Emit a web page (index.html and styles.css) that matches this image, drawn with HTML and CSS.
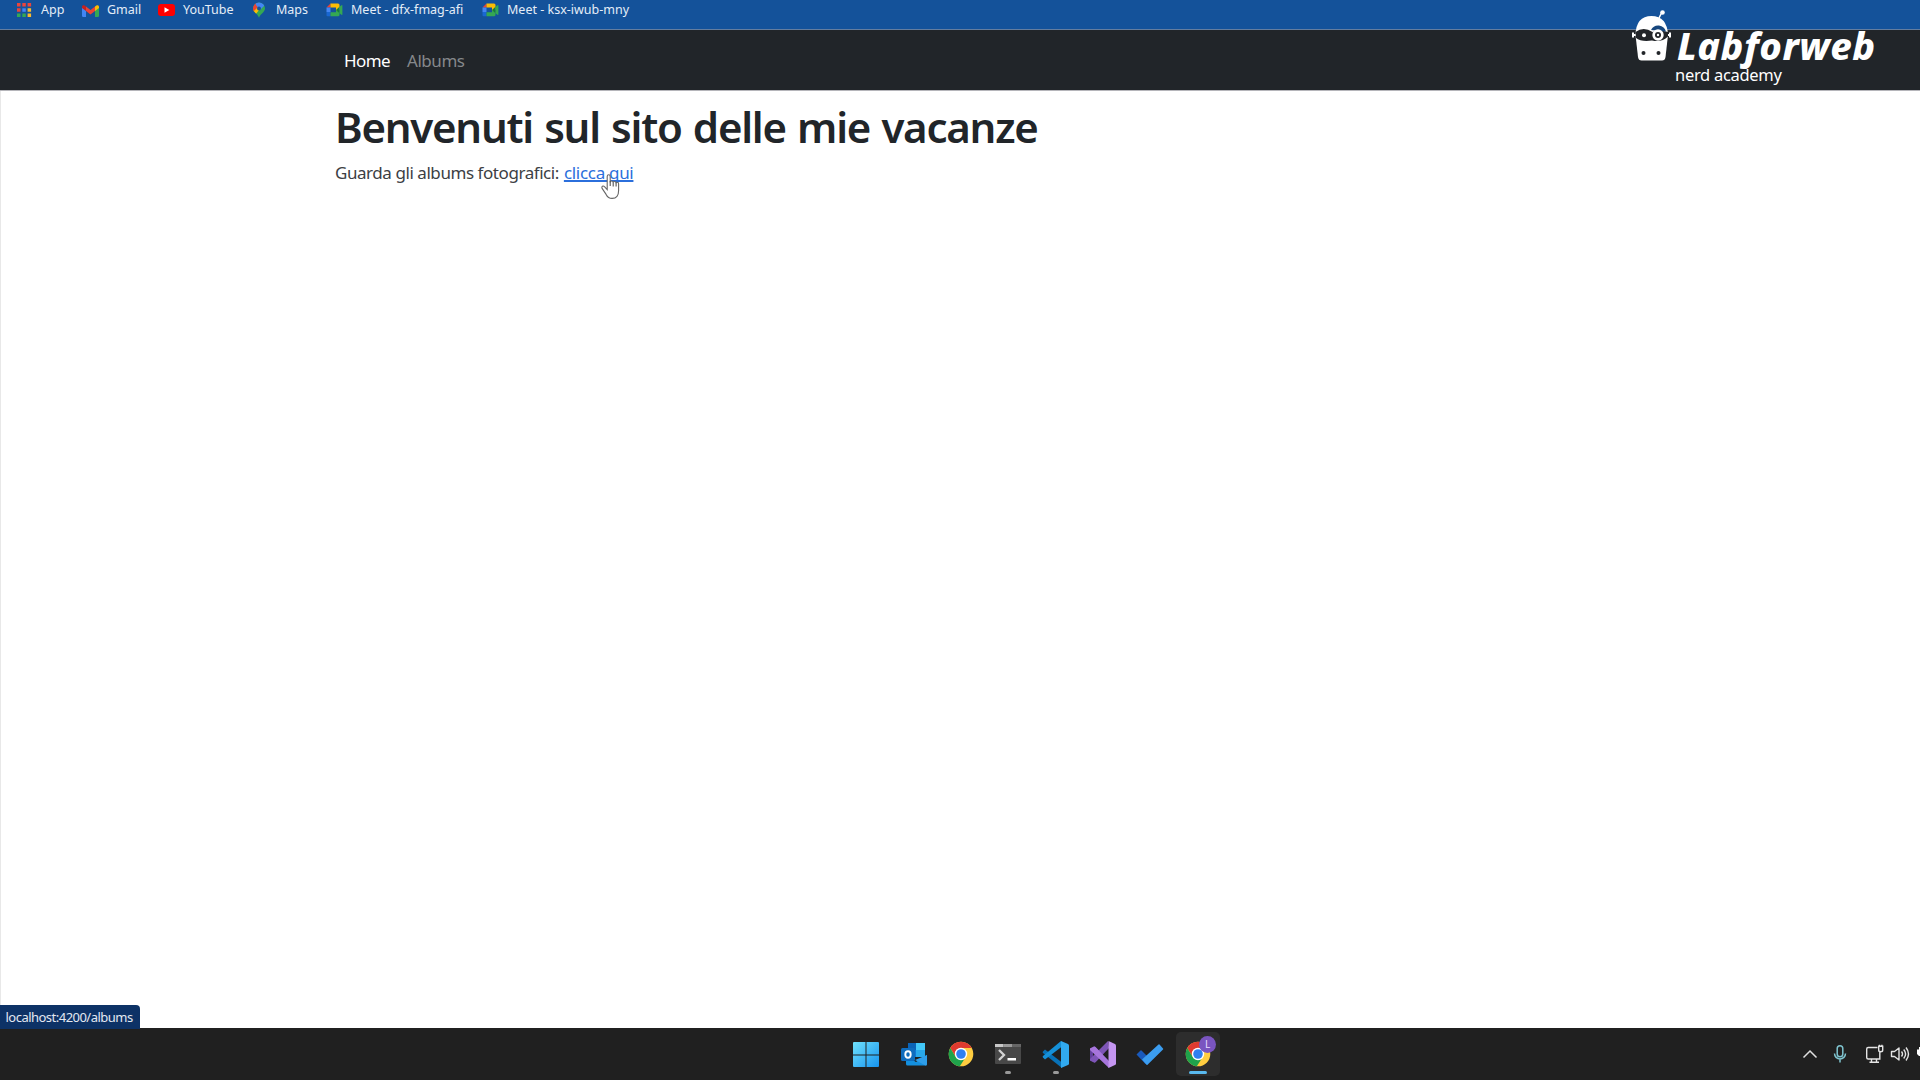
FILE: index.html
```html
<!DOCTYPE html>
<html lang="it">
<head>
<meta charset="utf-8">
<title>Vacanze</title>
<link rel="stylesheet" href="styles.css">
</head>
<body>
<div class="screen">
  <div class="bookmarks">
    <div class="bookmark">
      <svg width="16" height="16" viewBox="0 0 16 16"><g fill="#e8453c"><path d="M1 1h3.500v3.500H1zM6.300 1h3.500v3.500H6.300zM11.600 1h3.500v3.500h-3.500zM1 6.300h3.500v3.500H1z"/></g><path fill="#4285f4" d="M6.300 6.300h3.500v3.500H6.300z"/><path fill="#f9bb2d" d="M11.600 6.300h3.500v3.500h-3.500zM11.600 11.600h3.500v3.500h-3.500z"/><path fill="#34a853" d="M1 11.600h3.500v3.500H1zM6.300 11.600h3.500v3.500H6.300z"/></svg>
      <span class="t-app">App</span>
    </div>
    <div class="bookmark">
      <svg width="17" height="16" viewBox="0 0 17 16"><path fill="#4285f4" d="M0 5l4 3v7H1.200Q0 15 0 13.800z"/><path fill="#34a853" d="M17 5l-4 3v7h2.800q1.200 0 1.200-1.200z"/><path fill="#fbbc04" d="M13 4.600l1.400-1c1.100-.9 2.600-.1 2.600 1.200V6l-4 3z"/><path fill="#ea4335" d="M4 9V4.600L8.500 8 13 4.600V9l-4.500 3.400z"/><path fill="#c5221f" d="M0 6V4.800C0 3.500 1.500 2.700 2.600 3.600l1.400 1V9z"/></svg>
      <span class="t-gmail">Gmail</span>
    </div>
    <div class="bookmark">
      <svg width="17" height="16" viewBox="0 0 17 16"><rect x="0" y="2" width="17" height="12" rx="3" fill="#f00"/><path fill="#fff" d="M6.500 5.300v5.400L11.300 8z"/></svg>
      <span class="t-youtube">YouTube</span>
    </div>
    <div class="bookmark">
      <svg width="16" height="16" viewBox="0 0 16 16"><defs><clipPath id="pin"><path d="M8 .5a6 6 0 0 0-6 6c0 3.600 4.500 5 6 9.300 1.500-4.300 6-5.700 6-9.300a6 6 0 0 0-6-6z"/></clipPath></defs><g clip-path="url(#pin)"><path fill="#34a853" d="M0 0h16v16H0z"/><path fill="#fbbc04" d="M0 11 9 2v5L4 13z"/><path fill="#ea4335" d="M0 0h5l3 4-6 6z"/><path fill="#4285f4" d="M4 0h9l1 3-5 5-4-5z"/></g><circle cx="8" cy="6.500" r="2" fill="#17539b"/></svg>
      <span class="t-maps">Maps</span>
    </div>
    <div class="bookmark">
      <svg width="17" height="16" viewBox="0 0 17 16"><g id="meet"><path fill="#ea4335" d="M0.500 5.500l4-4v4z"/><path fill="#4285f4" d="M.5 5.500h4V10h-4z"/><path fill="#1967d2" d="M.5 10h4v4.200h-3q-1 0-1-1z"/><path fill="#fbbc04" d="M4.500 1.500H12q1.500 0 1.500 1.500v4.500l-3.500 2V5.500H4.500z"/><path fill="#34a853" d="M4.500 10.200H10V8l3.500 2v2.700q0 1.500-1.500 1.500H4.500z"/><path fill="#188038" d="m10 8 3.500-3.300v6.600z"/><path fill="#34a853" d="m13.500 4.700 2-1.500q.9-.5.900.5v8.600q0 1-.9.500l-2-1.500z"/></g></svg>
      <span class="t-meet1">Meet - dfx-fmag-afi</span>
    </div>
    <div class="bookmark">
      <svg width="17" height="16" viewBox="0 0 17 16"><use href="#meet"/></svg>
      <span class="t-meet2">Meet - ksx-iwub-mny</span>
    </div>
  </div>
  <nav class="navbar">
    <a class="nav-link active">Home</a>
    <a class="nav-link">Albums</a>
  </nav>
  <main class="page">
    <h1><span>Benvenuti sul sito delle mie vacanze</span></h1>
    <p><span class="lead">Guarda gli albums fotografici:</span><a class="link">clicca qui</a></p>
  </main>
  <footer class="taskbar">
    <div class="apps">
      <div class="app">
        <svg width="32" height="32" viewBox="0 0 32 32"><defs><linearGradient id="win" x1="3" y1="3" x2="29" y2="29" gradientUnits="userSpaceOnUse"><stop offset="0" stop-color="#6fe0fb"/><stop offset="1" stop-color="#1593f0"/></linearGradient></defs><path fill="url(#win)" d="M3 4q0-1 1-1h11.500v12.500H3zM16.500 3H28q1 0 1 1v11.500H16.500zM3 16.500h12.500V28H4q-1 0-1-1zM16.500 16.500H29V27q0 1-1 1H16.500z"/></svg>
      </div>
      <div class="app">
        <svg width="32" height="32" viewBox="0 0 32 32"><path fill="#28a8ea" d="M10 4h17v14H10z"/><path fill="#0a64b8" d="M10 4h8v7h-8z"/><path fill="#50d9ff" d="M18 4h9v7h-9z" opacity=".65"/><path fill="#0f78d4" d="M10 11h8v7h-8z"/><path fill="#1490df" d="M8 17l10 6 11-7v9q0 1.500-1.500 1.500H9.500Q8 26.500 8 25z"/><path fill="#2f9ee9" d="M29 16v9q0 1.500-1.500 1.500L17 21z"/><rect x="3" y="9" width="14" height="13" rx="1.500" fill="#0f6cbd"/><ellipse cx="10" cy="15.500" rx="2.700" ry="3.200" fill="none" stroke="#fff" stroke-width="1.900"/></svg>
      </div>
      <div class="app">
        <svg width="32" height="32" viewBox="0 0 32 32"><use href="#chrome"/></svg>
      </div>
      <div class="app running">
        <svg width="32" height="32" viewBox="0 0 32 32"><path fill="#484848" d="M3 5h26v19q0 1-1 1H4q-1 0-1-1z"/><path fill="#c8c8c8" d="M3 5h8.500v3H3z"/><path fill="#9a9a9a" d="M11.500 5H20v3h-8.500z"/><path fill="#666" d="M20 5h9v3h-9z"/><path d="m7 11 5 5-5 5" fill="none" stroke="#d4d4d4" stroke-width="2.300"/><path fill="#fff" d="M15.500 19H24v2.500h-8.500z"/></svg>
      </div>
      <div class="app running">
        <svg width="32" height="32" viewBox="0 0 32 32"><path fill="#0872b8" d="m22 23.500-17-13-2 2q-.7.800 0 1.500L22 29z"/><path fill="#1590d8" d="m22 7.500-17 13-2-2q-.7-.8 0-1.500L21 2z"/><path fill="#31aaf0" d="M21 2l7 3q1 .5 1 1.500v18q0 1-1 1.500l-7 3V22.500z"/></svg>
      </div>
      <div class="app">
        <svg width="32" height="32" viewBox="0 0 32 32"><path fill="#63409d" d="m3 9.500 4-2q1-.3 1.500.5L16 15.500 8.500 23q-.7.700-1.500.3l-4-2zm3 3.500v5l2.500-2.500z" fill-rule="evenodd"/><path fill="#7e55b7" d="M21 2 3 20v1.500l4 2q.8.400 1.500-.3L22 9z"/><path fill="#a775dc" d="M3 9.500l4-2q1-.3 1.500.5L22 22v7L3 11z"/><path fill="#c495f1" d="m21.500 2 6.500 3q1 .5 1 1.500v18q0 1-1 1.500l-6.500 3z"/></svg>
      </div>
      <div class="app">
        <svg width="32" height="32" viewBox="0 0 32 32"><path fill="#195abd" d="m2.500 15.500 4-4q.5-.5 1 0l8.500 8.500-4.500 5z"/><path fill="#3b9df0" d="m8 20.500 16.500-15q.5-.5 1 0l3.500 4q.5.500 0 1L13.500 25.700q-.5.500-1 0z"/></svg>
      </div>
      <div class="app current">
        <svg width="32" height="32" viewBox="0 0 32 32"><g id="chrome"><circle cx="16" cy="15" r="12.300" fill="#ffcd40"/><path fill="#df3a2f" d="M5.300 8.900A12.300 12.300 0 0 1 26.700 9H16l-5.200 9z"/><path fill="#1fa34b" d="M5.300 8.900 10.700 18 16 21l3.500-1-4.700 7.300A12.300 12.300 0 0 1 5.300 8.900z"/><circle cx="16" cy="15" r="6.200" fill="#fff"/><circle cx="16" cy="15" r="4.800" fill="#2f7ff0"/></g></svg>
        <span class="avatar">L</span>
      </div>
    </div>
    <div class="tray">
      <svg width="16" height="10" viewBox="0 0 16 10" fill="none" stroke="#e0e0e0" stroke-width="1.500"><path d="m1.500 8.500 6.500-6.500 6.500 6.500"/></svg>
      <svg width="14" height="20" viewBox="0 0 14 20" fill="none" stroke="#7fc4cf" stroke-width="1.500"><rect x="4.200" y="1.800" width="5.600" height="11" rx="2.800"/><path d="M1.500 9.500a5.500 5.500 0 0 0 11 0M7 15v3.500"/></svg>
      <svg width="20" height="20" viewBox="0 0 20 20" fill="none" stroke="#e4e4e4" stroke-width="1.400"><path d="M12.500 3.500H3.200q-1.500 0-1.500 1.500v8.500q0 1.500 1.500 1.500h11.600V9M6.500 15v3m5-3v3M4.500 18.300h9.500"/><path d="M13.700 2.200h4v4q0 1.500-2 1.500t-2-1.500zM14.800 9V7.500M14.500 2V.8M16.900 2V.8"/></svg>
      <svg width="20" height="18" viewBox="0 0 20 18" fill="none" stroke="#e4e4e4" stroke-width="1.400" stroke-linejoin="round"><path d="M1.500 6.500h3L9 3v12l-4.500-3.500h-3zM11.500 6.500q2 2.500 0 5M13.700 4.500q3.800 4.500 0 9M16 2.500q5 6.500 0 13"/></svg>
      <svg class="power" width="3" height="18" viewBox="0 0 3 18"><path d="M0 4.500h3V11H2L0 9zM2 2h1v3H2z" fill="#fff"/></svg>
    </div>
  </footer>

  <div class="status">localhost:4200/albums</div>
  <svg class="cursor" width="22" height="28" viewBox="0 0 22 28"><path d="M7.200 16.500V3.500q0-1.700 1.500-1.700t1.500 1.700v6q0-1.500 1.500-1.500T13.200 9.800q0-1.300 1.400-1.300t1.400 1.700q0-1 1.300-1t1.300 1.700v6.500q0 8-6.500 8-4 0-6-4l-4-6q-.7-1.500.3-2.200 1-.6 2.300.6z" fill="#fff" stroke="#666" stroke-width="1.100"/><path d="M10.200 8v5m3-3.500v4m2.900-3.500v3.500" stroke="#555" stroke-width="1.100"/></svg>
  <div class="brand">
    <svg width="42" height="54" viewBox="0 0 42 54"><path d="m27 9 3-6" stroke="#fff" stroke-width="1.600"/><circle cx="30.500" cy="3.500" r="2.300" fill="#fff"/><path fill="#fff" d="M3.500 26Q4 7 19.500 7 35 7 36 26l-2.500 22q-.5 3.500-3.500 3.500H9.500Q6.500 51.500 6 48z"/><path d="M1 23.500v5M38 23.500v5M1 26h4m30 0h3" stroke="#fff" stroke-width="2"/><path fill="#222529" d="M3.500 23q8-6 17 0 7-3 15.500 0v4.500q-6 6-16 4Q9 33 4 29z"/><path fill="#17477e" d="M19 21q2.500-5 8-4.500 5.500.8 7 6z"/><circle cx="26" cy="26" r="5.700" fill="#fff"/><circle cx="26" cy="26" r="3" fill="#222529"/><circle cx="26" cy="26" r="1.200" fill="#fff"/><circle cx="12" cy="26.300" r="2" fill="#fff"/><circle cx="11.500" cy="44" r="2" fill="#222529"/><circle cx="26.500" cy="44" r="2" fill="#222529"/></svg>
    <div class="wordmark"><span class="name">Labforweb</span><span class="tagline">nerd academy</span></div>
  </div>
</div>
</body>
</html>
```
FILE: styles.css
```css
* { box-sizing: border-box; }
body { margin: 0; font-family: "Noto Sans", sans-serif; }
svg { display: block; flex: none; }
.screen {
  width: 1920px;
  height: 1080px;
  position: relative;
  overflow: hidden;
  display: flex;
  flex-direction: column;
  background: #fff;
}
.bookmarks {
  height: 30px;
  flex: none;
  display: grid;
  grid-template-columns: 66px 76px 93px 75px 156px 200px;
  padding: 1px 0 0 16px;
  align-items: start;
  background: #14529a;
  border-bottom: 1px solid #647d9f;
}
.bookmark {
  height: 18px;
  display: flex;
  align-items: center;
  white-space: nowrap;
  color: #e4edf7;
  font-size: 12.5px;
  line-height: 18px;
}
.bookmark svg { margin-right: 8px; }
.bookmark:first-child svg, .bookmark:nth-child(4) svg { margin-right: 9px; }
.navbar {
  height: 61px;
  flex: none;
  display: flex;
  align-items: center;
  gap: 17px;
  padding: 0 0 0 344px;
  background: #212529;
  border-bottom: 1px solid #b5b5ba;
}
.nav-link { color: #85888b; font-size: 17px; letter-spacing: -.45px; }
.nav-link.active { color: #fff; letter-spacing: -.6px; }
.page { flex: 1; padding: 7px 0 0 334px; border-left: 1px solid #e8e8e8; }
h1 {
  margin: 0;
  height: 58px;
  font-size: 42px;
  line-height: 58px;
  font-weight: 600;
  letter-spacing: -1.25px;
  word-spacing: 1.6px;
  color: #212529;
  white-space: nowrap;
}
p {
  margin: 4px 0 0;
  display: flex;
  gap: 5px;
  font-size: 17px;
  line-height: 26px;
  letter-spacing: -.3px;
  color: #3c4044;
}
.lead { letter-spacing: -.44px; }
.link { color: #2b6fdc; text-decoration: underline; text-decoration-thickness: 2px; text-underline-offset: 1px; text-decoration-skip-ink: none; }
.taskbar {
  height: 52px;
  flex: none;
  display: grid;
  grid-template-columns: 1fr auto 1fr;
  background: #202020;
}
.apps { grid-column: 2; display: flex; gap: 4px; padding-left: 144px; }
.app {
  position: relative;
  width: 43.4px;
  height: 44px;
  margin-top: 4px;
  display: flex;
  justify-content: center;
  padding-top: 7px;
  border-radius: 5px;
}
.running::after, .current::after {
  content: "";
  position: absolute;
  bottom: 2px;
  left: 50%;
  width: 6px;
  height: 3px;
  margin-left: -3px;
  border-radius: 2px;
  background: #999;
}
.current { background: #2d2d2d; }
.current::after { width: 18px; margin-left: -9px; background: #59b9ee; }
.avatar {
  position: absolute;
  left: 23px;
  top: 4px;
  width: 17px;
  height: 17px;
  border-radius: 50%;
  background: #7a55c0;
  color: #e8dcff;
  font-size: 10px;
  line-height: 17px;
  text-align: center;
}
.tray {
  display: flex;
  justify-content: flex-end;
  align-items: center;
}
.status {
  position: absolute;
  left: 0;
  top: 1005px;
  width: 140px;
  height: 24px;
  padding: 1px 0 0 5.5px;
  border-radius: 0 4px 0 0;
  background: #0d3266;
  color: #e3e9f2;
  font-size: 13px;
  line-height: 23px;
  letter-spacing: -.52px;
  white-space: nowrap;
}
.cursor { position: absolute; left: 600px; top: 173px; }
.brand {
  position: absolute;
  left: 1632px;
  top: 9px;
  display: flex;
  color: #fff;
}
.wordmark { display: flex; flex-direction: column; padding: 17px 0 0 1px; }
.name { font: italic 800 38px/39px "Noto Sans", sans-serif; letter-spacing: .5px; padding-left: 2px; }
.tagline { font-size: 16.500px; line-height: 20px; letter-spacing: -.3px; }
.tray svg:nth-child(1) { margin-right: 15px; }
.tray svg:nth-child(2) { margin-right: 18px; }
.tray svg:nth-child(3) { margin-right: 5px; }
.tray svg:nth-child(4) { margin-right: 7px; }
```
